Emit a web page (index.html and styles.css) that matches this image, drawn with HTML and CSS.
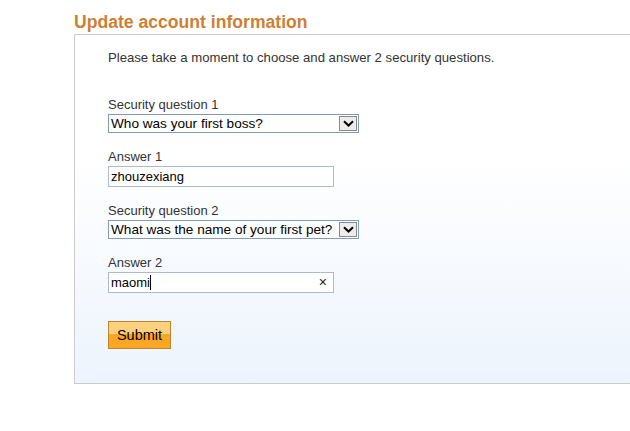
FILE: index.html
```html
<!DOCTYPE html>
<html>
<head>
<meta charset="utf-8">
<link rel="stylesheet" href="styles.css">
</head>
<body>
<div class="page">
  <h1 class="title">Update account information</h1>
  <div class="box">
    <p class="intro">Please take a moment to choose and answer 2 security questions.</p>
    <div class="field">
      <div class="label">Security question 1</div>
      <div class="select"><span class="sel-text">Who was your first boss?</span><span class="arrow"><svg width="11" height="7" viewBox="0 0 11 7"><path d="M1 1.2 L5.5 5.5 L10 1.2" fill="none" stroke="#000" stroke-width="2"/></svg></span></div>
    </div>
    <div class="field">
      <div class="label">Answer 1</div>
      <div class="input">zhouzexiang</div>
    </div>
    <div class="field">
      <div class="label">Security question 2</div>
      <div class="select"><span class="sel-text">What was the name of your first pet?</span><span class="arrow"><svg width="11" height="7" viewBox="0 0 11 7"><path d="M1 1.2 L5.5 5.5 L10 1.2" fill="none" stroke="#000" stroke-width="2"/></svg></span></div>
    </div>
    <div class="field">
      <div class="label">Answer 2</div>
      <div class="input focused"><span class="val">maomi</span><span class="caret"></span><span class="clear">×</span></div>
    </div>
    <button class="submit">Submit</button>
  </div>
</div>
</body>
</html>
```
FILE: styles.css
```css
html, body {
  margin: 0;
  padding: 0;
  background: #fff;
}
body {
  font-family: "Liberation Sans", Arial, sans-serif;
  font-size: 13px;
  color: #333;
}
.page {
  padding-left: 74px;
  padding-top: 12px;
}
.title {
  margin: 0;
  font-size: 17.6px;
  line-height: 20px;
  font-weight: bold;
  color: #cf7f33;
}
.box {
  margin-top: 2px;
  border: 1px solid #cccccc;
  border-right: none;
  background: linear-gradient(#ffffff 35%, #edf4fd);
  padding: 15px 0 34px 33px;
  height: 299px;
  box-sizing: content-box;
}
.intro {
  margin: 0 0 32px;
  line-height: 15px;
  font-size: 13.15px;
}
.field {
  margin-bottom: 16px;
}
.label {
  line-height: 15px;
  margin-bottom: 2px;
}
.select {
  display: flex;
  align-items: stretch;
  width: 251px;
  height: 19px;
  box-sizing: border-box;
  border: 1px solid #7f9db9;
  background: #fff;
  color: #000;
}
.sel-text {
  flex: 1;
  line-height: 17px;
  padding-left: 2px;
  font-size: 13.6px;
  white-space: nowrap;
  overflow: hidden;
}
.arrow {
  width: 18px;
  margin: 1px 1px 1px 0;
  border: 1px solid #8a8a8a;
  background: #ececec;
  display: flex;
  align-items: center;
  justify-content: center;
  box-sizing: border-box;
}
.input {
  display: flex;
  align-items: center;
  width: 226px;
  height: 21px;
  box-sizing: border-box;
  border: 1px solid #a9bcd0;
  background: #fff;
  color: #000;
  padding-left: 2px;
  line-height: 19px;
  margin-top: 2px;
}
.caret {
  width: 1px;
  height: 15px;
  background: #000;
}
.val {
  white-space: nowrap;
}
.clear {
  margin-left: auto;
  margin-right: 6px;
  font-size: 14px;
  color: #222;
}
.submit {
  display: block;
  margin-top: 28px;
  width: 63px;
  height: 28px;
  padding: 0;
  border: 1px solid #c0852a;
  background: linear-gradient(#fdd07d 0, #fdd07d 48%, #fba624 48%, #fba624 100%);
  font-family: "Liberation Sans", Arial, sans-serif;
  font-size: 14.5px;
  color: #000;
}
```
